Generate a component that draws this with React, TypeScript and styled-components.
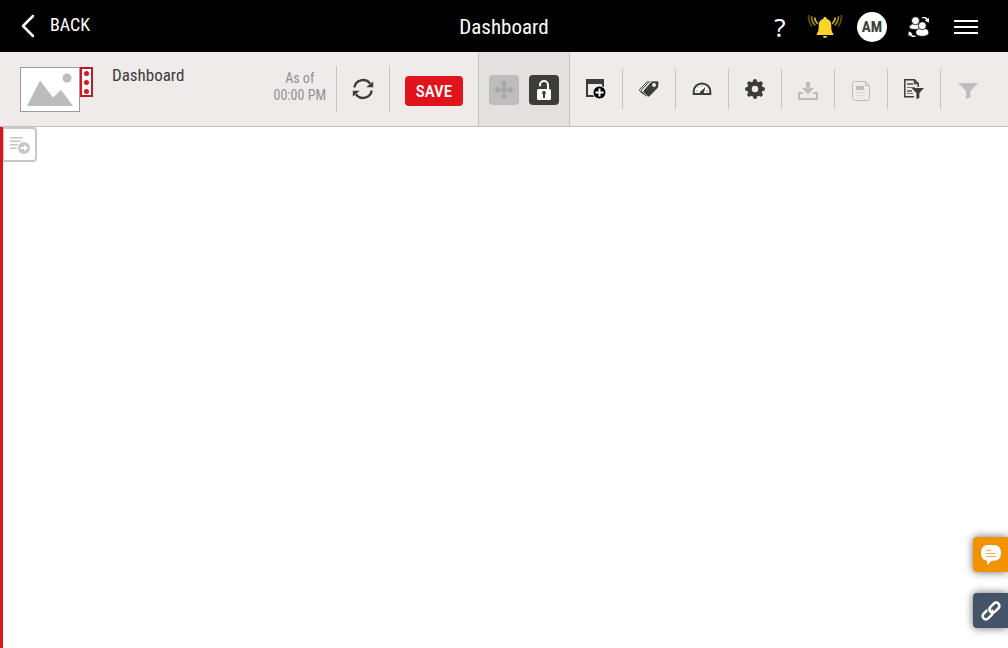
import React from "react";
import styled, { createGlobalStyle } from "styled-components";

const GlobalStyle = createGlobalStyle`
  *, *::before, *::after { box-sizing: border-box; }
  html, body, #root { height: 100%; }
  body {
    margin: 0;
    background: #fff;
    color: #3c3c3b;
    font-family: "Roboto Condensed", "Liberation Sans Narrow", Roboto, sans-serif;
    font-size: 17px;
  }
  button {
    display: inline-flex;
    align-items: center;
    justify-content: center;
    padding: 0;
    border: 0;
    background: none;
    color: inherit;
    font: inherit;
    cursor: pointer;
  }
  button:disabled { cursor: default; }
  svg { display: block; flex: none; }
`;

const Page = styled.div`
  display: flex;
  flex-direction: column;
  min-height: 100%;
`;

const Header = styled.header`
  display: grid;
  grid-template-columns: 1fr auto 1fr;
  align-items: center;
  height: 52px;
  padding: 0 20px;
  background: #000;
  color: #fff;
`;

const BackButton = styled.button`
  justify-self: start;
  gap: 14px;
  font-size: 18px;
  line-height: 20px;
`;

const BackLabel = styled.span`
  padding-bottom: 2px;
`;

const PageTitle = styled.h1`
  margin: 0;
  padding-top: 2px;
  font-size: 21px;
  font-weight: 400;
  line-height: 24px;
`;

const HeaderActions = styled.div`
  display: flex;
  justify-self: end;
  gap: 9px;
  padding: 2px 3px 0 0;
`;

const HeaderButton = styled.button`
  width: 38px;
  height: 38px;
`;

const HelpButton = styled(HeaderButton)`
  width: 34px;
  font-family: "Noto Sans", sans-serif;
  font-size: 26px;
`;

const Avatar = styled.span`
  display: flex;
  align-items: center;
  justify-content: center;
  width: 30px;
  height: 30px;
  border-radius: 50%;
  background: #fff;
  color: #3c3c3b;
  font-size: 15px;
  font-weight: 700;
`;

const Toolbar = styled.div`
  display: flex;
  align-items: stretch;
  height: 75px;
  padding: 0 14px 0 20px;
  border-bottom: 1px solid #c4c2c2;
  background: #efebea;
`;

const Branding = styled.div`
  display: flex;
  flex: 1;
  align-items: flex-start;
  padding-top: 15px;
`;

const Thumbnail = styled.div`
  display: flex;
  align-items: flex-end;
  justify-content: center;
  width: 60px;
  height: 45px;
  padding-bottom: 4px;
  border: 1px solid #9c9b9b;
  background: #fff;
`;

const MoreButton = styled.button`
  width: 13px;
  height: 30px;
  border: 2px solid #b5202a;
  border-left-color: #dd141d;
  background: #fff;
`;

const DashboardName = styled.h2`
  margin: 0 0 0 19px;
  font-size: 17px;
  font-weight: 400;
  line-height: 16px;
`;

const Timestamp = styled.div`
  align-self: center;
  padding: 0 10px 4px 0;
  color: #92908e;
  font-size: 14px;
  line-height: 17px;
  text-align: center;
`;

const ToolCell = styled.div<{ $divider?: "left" | "right" }>`
  display: flex;
  align-self: center;
  align-items: center;
  justify-content: center;
  width: 53px;
  height: ${(p) => (p.$divider === "left" ? 46 : 40)}px;
  ${(p) => p.$divider && `border-${p.$divider}: 1px solid #c4c2c2;`}
`;

const SaveCell = styled.div`
  display: flex;
  align-self: center;
  align-items: center;
  height: 46px;
  padding: 4px 15px 0;
  border-left: 1px solid #c4c2c2;
`;

const SaveButton = styled.button`
  width: 58px;
  height: 30px;
  border-radius: 4px;
  background: #e1131b;
  color: #fff;
  font-weight: 500;
`;

const ModeGroup = styled.div`
  display: flex;
  align-items: center;
  gap: 10px;
  padding: 2px 10px 0;
  border: solid #c4c2c2;
  border-width: 0 1px;
  background: #e3e0df;
`;

const ModeButton = styled.button`
  width: 30px;
  height: 30px;
  border-radius: 4px;
  background: #3c3c3b;
  color: #fff;
  &:disabled { background: #bebdbd; color: #a9a8a8; }
`;

const ToolButton = styled.button`
  width: 40px;
  height: 40px;
  &:disabled { padding-top: 3px; color: #bebdbd; }
`;

const Canvas = styled.main`
  flex: 1;
  border-left: 3px solid #dd141d;
`;

const PanelButton = styled.button`
  width: 34px;
  height: 35px;
  border: 2px solid #c9c8c8;
  border-left-width: 1px;
  border-radius: 0 4px 4px 0;
  background: #fff;
  color: #c6c6c6;
`;

const FloatingActions = styled.aside`
  position: fixed;
  right: 0;
  bottom: 20px;
  display: flex;
  flex-direction: column;
  gap: 21px;
`;

const FloatingButton = styled.button<{ $color: string }>`
  width: 35px;
  height: 35px;
  border-radius: 4px 0 0 4px;
  background: ${(p) => p.$color};
  color: #fff;
  box-shadow: 0 0 8px rgba(0, 0, 0, 0.6);
`;

const ChevronIcon = () => (
  <svg width="16" height="24" viewBox="0 0 16 24" fill="none" stroke="currentColor" strokeWidth="2.5" strokeLinecap="round" strokeLinejoin="round">
    <path d="M13 2 3 12l10 10" />
  </svg>
);

const BellIcon = () => (
  <svg width="36" height="24" viewBox="0 0 36 24" fill="#fdd32a">
    <path d="M18 2c1 0 1.700.7 1.700 1.700 3 .8 4.600 3.300 4.600 6.600 0 5 .4 6.700 2 8.500v1.200H9.700v-1.200c1.600-1.800 2-3.500 2-8.500 0-3.300 1.600-5.800 4.600-6.600C16.300 2.700 17 2 18 2z" />
    <path d="M16 21h4a2 2 0 0 1-4 0z" />
    <g fill="none" stroke="#fdd32a" strokeWidth="1.800">
      <path opacity=".85" d="M7.700 2.500Q8 6.500 10.800 8.800M28.300 2.500Q28 6.500 25.200 8.800" />
      <path opacity=".6" d="M4.600 1.200Q4.500 6.500 8.300 10.300M31.400 1.200Q31.500 6.500 27.700 10.300" />
      <path opacity=".35" d="M1.700 0Q1 6.500 5 11.300M34.300 0Q35 6.500 31 11.300" />
    </g>
  </svg>
);

const UsersIcon = () => (
  <svg width="22" height="22" viewBox="0 0 22 22" fill="currentColor" stroke="#000" strokeWidth=".8">
    <path d="M1.200 12C.8 9 4 7.500 7.500 7.500s5 2 5 5c-2 1.500-9 1.500-11.300-.5z" />
    <circle cx="7.500" cy="4.700" r="4" />
    <path d="M7.800 16.500c0-3 3-4.500 6.500-4.500s6.500 1.500 6.500 4.500c0 2.800-3 3.800-6.500 3.800s-6.500-1-6.500-3.800z" />
    <circle cx="14.300" cy="9.700" r="4" />
    <g stroke="none">
      <path d="M14 1.200c2.500-.7 4.500-.1 5.500 1.500l1.500-.6-.1 4.600-4-2.200 1.200-.8c-.8-1.200-2-1.500-4.100-1.300z" />
      <path d="M7.500 20.800c-2.500.7-4.500.1-5.500-1.500l-1.500.6.1-4.600 4 2.200-1.200.8c.8 1.200 2 1.500 4.100 1.300z" />
    </g>
  </svg>
);

const MenuIcon = () => (
  <svg width="24" height="16" viewBox="0 0 24 16" fill="currentColor">
    <path d="M0 1h24v2H0zM0 7h24v2H0zM0 13h24v2H0z" />
  </svg>
);

const PictureIcon = () => (
  <svg width="48" height="35" viewBox="0 0 48 35" fill="#bcbcbc">
    <path d="M1 34 14 8.500l13 17 8-7.500 12 16z" />
    <circle cx="41" cy="6" r="4.500" />
  </svg>
);

const DotsIcon = () => (
  <svg width="9" height="26" viewBox="0 0 9 26" fill="#dd141d">
    <circle cx="4.500" cy="4.500" r="2.500" />
    <circle cx="4.500" cy="13.500" r="2.500" />
    <circle cx="4.500" cy="22.500" r="2.500" />
  </svg>
);

const RefreshIcon = () => (
  <svg width="22" height="22" viewBox="0 0 22 22" fill="currentColor">
    <path fill="none" stroke="currentColor" strokeWidth="2.300" d="M2.300 9.500a8.800 8.800 0 0 1 15.800-3.800M19.700 12.500a8.800 8.800 0 0 1-15.800 3.800" />
    <path d="M21.200 3.500v5.800h-7zM.8 18.500v-5.800h7z" />
  </svg>
);

const MoveIcon = () => (
  <svg width="20" height="20" viewBox="0 0 20 20" fill="currentColor">
    <path d="m10 0 4.200 4.500h-2.700v4h4V5.800L20 10l-4.500 4.200v-2.700h-4v4h2.700L10 20l-4.200-4.500h2.700v-4h-4v2.700L0 10l4.500-4.200v2.700h4v-4H5.800z" />
  </svg>
);

const UnlockIcon = () => (
  <svg width="16" height="20" viewBox="0 0 16 20" fill="currentColor">
    <path fill="none" stroke="currentColor" strokeWidth="2" strokeLinecap="round" d="M4 5.500V5a4 4 0 0 1 8 0v5" />
    <rect x="1" y="9" width="14" height="11" rx="1.500" />
    <path fill="#3c3c3b" d="M8 11a1.900 1.900 0 0 1 1 3.500V18H7v-3.500A1.900 1.900 0 0 1 8 11z" />
  </svg>
);

const AddWidgetIcon = () => (
  <svg width="22" height="22" viewBox="0 0 22 22">
    <path fill="#3c3c3b" d="M1 1h18v10h-2V6H3v11h6v2H1z" />
    <circle cx="14.500" cy="14.500" r="6.500" stroke="#efebea" strokeWidth="1" />
    <path stroke="#fff" strokeWidth="2" d="M10.500 14.500h8M14.500 10.500v8" />
  </svg>
);

const TagIcon = () => (
  <svg width="20" height="18" viewBox="0 0 20 18" fill="currentColor">
    <path fillRule="evenodd" d="M12.500 1.500 18 1.200c1 0 1.500.5 1.500 1.500L19 7.500 10.500 16.300c-.6.6-1.200.6-1.800 0L5 12.700c-.8-.8-.8-1.700 0-2.500zM15 3a2 2 0 1 0 .01 4A2 2 0 0 0 15 3z" />
    <path fill="none" stroke="currentColor" strokeWidth="1" d="M10.800 1 3 9.300c-.9.900-.9 1.800 0 2.700L7.300 16.300M8.700 1.200.8 9.200c-.5.5-.5 1.200 0 1.700l3.400 3.400" />
  </svg>
);

const GaugeIcon = () => (
  <svg width="20" height="16" viewBox="0 0 20 16" fill="currentColor">
    <path fill="#faf9f9" stroke="currentColor" strokeWidth="2" d="M1.700 13V10.500a8.300 8 0 0 1 16.600 0V13z" />
    <path stroke="#a2a09f" strokeWidth="1" d="M4 10h2M5.700 5.500 7 7M10 4v2M16 10h-2" />
    <path d="m13.500 6-1.600 5.500a2 2 0 1 1-2.600-1.700z" />
  </svg>
);

const GearIcon = () => (
  <svg width="22" height="22" viewBox="0 0 22 22" fill="none" stroke="currentColor">
    <path strokeWidth="4" strokeLinecap="round" d="M11 3v1M11 18v1M3 11h1M18 11h1M5.300 5.300l.7.700M16 16l.7.700M16.700 5.300l-.7.700M6 16l-.7.700" />
    <circle cx="11" cy="11" r="5.500" strokeWidth="4.500" />
  </svg>
);

const DownloadIcon = () => (
  <svg width="20" height="18" viewBox="0 0 20 18" fill="currentColor">
    <path d="M8 0h4v6h4l-6 6.500L4 6h4z" />
    <path d="M0 10h5v2H2v4h16v-4h-3v-2h5v8H0z" />
  </svg>
);

const ReportIcon = () => (
  <svg width="18" height="20" viewBox="0 0 18 20" fill="none" stroke="currentColor">
    <path strokeWidth="1" d="M2.500.5h11l4 4v13c0 1.200-.8 2-2 2h-13c-1.200 0-2-.8-2-2v-15c0-1.200.8-2 2-2zM13.500.5v4h4" />
    <path fill="currentColor" stroke="none" d="M4 5h8v4H4z" />
    <path opacity=".35" d="M4 11.500h9M4 14.500h9" />
  </svg>
);

const ReportFilterIcon = () => (
  <svg width="20" height="20" viewBox="0 0 20 20" fill="currentColor">
    <path fill="none" stroke="currentColor" strokeWidth="1.500" d="M10 17.700H.8V.8h9.700l3.700 3.700V8M10.500.8v3.700h3.700" />
    <path fill="#777675" d="M3 4h6v2H3zM3 8h8v1H3zM3 11h5v2H3zM3 14h6v1H3z" />
    <path d="M7.500 9H20l-4.600 5v5l-3 1v-6z" />
  </svg>
);

const FilterIcon = () => (
  <svg width="20" height="16" viewBox="0 0 20 16" fill="currentColor">
    <path d="M0 0h20l-7.500 8v6L8 16V8z" />
  </svg>
);

const PanelIcon = () => (
  <svg width="20" height="18" viewBox="0 0 20 18" fill="currentColor">
    <path d="M0 1h13v1.500H0zM0 4.500h11V6H0zM0 8h8v1.500H0zM0 11.500h7V13H0z" />
    <circle cx="14" cy="12" r="6" />
    <path fill="#fff" d="M10.500 11H14V8.800l4 3.200-4 3.200V13h-3.500z" />
  </svg>
);

const ChatIcon = () => (
  <svg width="20" height="20" viewBox="0 0 20 20" fill="currentColor">
    <path d="M7 0h6c4.500 0 7 3 7 7.800 0 5-2.500 8-7 8h-2.200L6 20v-4.300C2 15.200 0 12.500 0 7.800 0 3 2.500 0 7 0z" />
    <path stroke="#f6b04a" d="M5 5.500h5M5 8.500h10M5 11.500h10" />
  </svg>
);

const LinkIcon = () => (
  <svg width="22" height="22" viewBox="-1 -1 22 22" fill="none">
    <g transform="rotate(-45 10 10)" strokeWidth="2.500">
      <rect x="-.5" y="6.700" width="11.500" height="6.600" rx="3.300" stroke="currentColor" />
      <path stroke="#445468" strokeWidth="4.500" d="M9 10a3.300 3.300 0 0 1 3.300-3.300" />
      <rect x="9" y="6.700" width="11.500" height="6.600" rx="3.300" stroke="currentColor" />
    </g>
  </svg>
);

const tools = [
  { label: "Add widget", Icon: AddWidgetIcon },
  { label: "Tags", Icon: TagIcon },
  { label: "Gauges", Icon: GaugeIcon },
  { label: "Settings", Icon: GearIcon },
  { label: "Download", Icon: DownloadIcon, disabled: true },
  { label: "Report", Icon: ReportIcon, disabled: true },
  { label: "Report filters", Icon: ReportFilterIcon },
  { label: "Filter", Icon: FilterIcon, disabled: true },
];

export default function App() {
  return (
    <Page>
      <GlobalStyle />
      <Header>
        <BackButton type="button">
          <ChevronIcon />
          <BackLabel>BACK</BackLabel>
        </BackButton>
        <PageTitle>Dashboard</PageTitle>
        <HeaderActions>
          <HelpButton type="button" aria-label="Help">?</HelpButton>
          <HeaderButton type="button" aria-label="Notifications"><BellIcon /></HeaderButton>
          <HeaderButton type="button" aria-label="Account"><Avatar>AM</Avatar></HeaderButton>
          <HeaderButton type="button" aria-label="Switch user"><UsersIcon /></HeaderButton>
          <HeaderButton type="button" aria-label="Menu"><MenuIcon /></HeaderButton>
        </HeaderActions>
      </Header>
      <Toolbar>
        <Branding>
          <Thumbnail><PictureIcon /></Thumbnail>
          <MoreButton type="button" aria-label="Image options"><DotsIcon /></MoreButton>
          <DashboardName>Dashboard</DashboardName>
        </Branding>
        <Timestamp>As of<br />00:00 PM</Timestamp>
        <ToolCell $divider="left">
          <ToolButton type="button" aria-label="Refresh"><RefreshIcon /></ToolButton>
        </ToolCell>
        <SaveCell>
          <SaveButton type="button">SAVE</SaveButton>
        </SaveCell>
        <ModeGroup>
          <ModeButton type="button" aria-label="Move" disabled><MoveIcon /></ModeButton>
          <ModeButton type="button" aria-label="Unlock"><UnlockIcon /></ModeButton>
        </ModeGroup>
        {tools.map(({ label, Icon, disabled }, i) => (
          <ToolCell key={label} $divider={i < tools.length - 1 ? "right" : undefined}>
            <ToolButton type="button" aria-label={label} disabled={disabled}><Icon /></ToolButton>
          </ToolCell>
        ))}
      </Toolbar>
      <Canvas>
        <PanelButton type="button" aria-label="Open panel"><PanelIcon /></PanelButton>
      </Canvas>
      <FloatingActions>
        <FloatingButton type="button" aria-label="Chat" $color="#f39200"><ChatIcon /></FloatingButton>
        <FloatingButton type="button" aria-label="Copy link" $color="#445468"><LinkIcon /></FloatingButton>
      </FloatingActions>
    </Page>
  );
}
